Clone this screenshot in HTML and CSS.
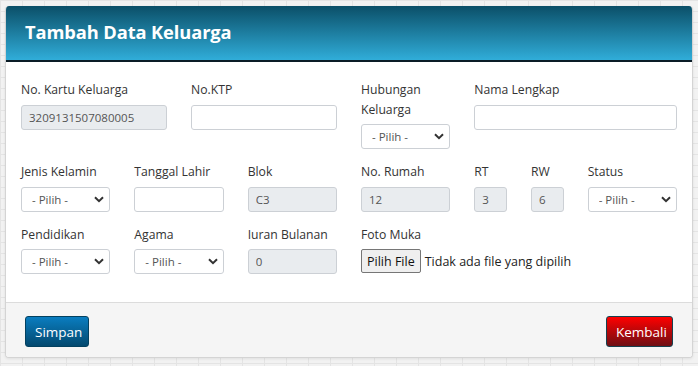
FILE: index.html
```html
<!DOCTYPE html>
<html lang="id">
<head>
<meta charset="utf-8">
<title>Tambah Data Keluarga</title>
<link rel="stylesheet" href="styles.css">
</head>
<body>
<div class="modal">
  <div class="modal-header">
    <h1 class="modal-title">Tambah Data Keluarga</h1>
  </div>
  <div class="modal-body">
    <div class="grid">
      <div class="field span-3">
        <label class="lbl">No. Kartu Keluarga</label>
        <input class="ctl" type="text" value="3209131507080005" readonly>
      </div>
      <div class="field span-3">
        <label class="lbl">No.KTP</label>
        <input class="ctl" type="text">
      </div>
      <div class="field span-2">
        <label class="lbl">Hubungan Keluarga</label>
        <select class="ctl sel"><option>- Pilih -</option></select>
      </div>
      <div class="field span-4">
        <label class="lbl">Nama Lengkap</label>
        <input class="ctl" type="text">
      </div>

      <div class="field span-2">
        <label class="lbl">Jenis Kelamin</label>
        <select class="ctl sel"><option>- Pilih -</option></select>
      </div>
      <div class="field span-2">
        <label class="lbl">Tanggal Lahir</label>
        <input class="ctl" type="text">
      </div>
      <div class="field span-2">
        <label class="lbl">Blok</label>
        <input class="ctl" type="text" value="C3" readonly>
      </div>
      <div class="field span-2">
        <label class="lbl">No. Rumah</label>
        <input class="ctl" type="text" value="12" readonly>
      </div>
      <div class="field span-1">
        <label class="lbl">RT</label>
        <input class="ctl" type="text" value="3" readonly>
      </div>
      <div class="field span-1">
        <label class="lbl">RW</label>
        <input class="ctl" type="text" value="6" readonly>
      </div>
      <div class="field span-2">
        <label class="lbl">Status</label>
        <select class="ctl sel"><option>- Pilih -</option></select>
      </div>

      <div class="field span-2">
        <label class="lbl">Pendidikan</label>
        <select class="ctl sel"><option>- Pilih -</option></select>
      </div>
      <div class="field span-2">
        <label class="lbl">Agama</label>
        <select class="ctl sel"><option>- Pilih -</option></select>
      </div>
      <div class="field span-2">
        <label class="lbl">Iuran Bulanan</label>
        <input class="ctl" type="text" value="0" readonly>
      </div>
      <div class="field span-6">
        <label class="lbl">Foto Muka</label>
        <div class="file">
          <button class="file-btn" type="button">Pilih File</button>
          <span class="file-text">Tidak ada file yang dipilih</span>
        </div>
      </div>
    </div>
  </div>
  <div class="modal-footer">
    <button class="btn btn-primary" type="button">Simpan</button>
    <button class="btn btn-danger" type="button">Kembali</button>
  </div>
</div>
</body>
</html>
```
FILE: styles.css
```css
* { box-sizing: border-box; }

html, body { height: 100%; }

body {
  margin: 0;
  padding: 6px 5px 0 5px;
  font-family: "Open Sans", "Noto Sans", sans-serif;
  color: #333;
  background-color: #f2f2f2;
  background-image:
    linear-gradient(#e4e4e4 1px, transparent 1px),
    linear-gradient(90deg, #e4e4e4 1px, transparent 1px);
  background-size: 22px 11px;
}

.modal {
  width: 688px;
  background: #fff;
  border: 1px solid #d4d4d4;
  border-top: none;
  border-radius: 4px;
  overflow: hidden;
  box-shadow: 0 1px 3px rgba(0,0,0,0.08);
}

.modal-header {
  height: 56px;
  background: linear-gradient(#0b4f68, #30add9);
  border-bottom: 2px solid #0a1c26;
  padding: 0 19px;
  display: flex;
  align-items: center;
}

.modal-title {
  margin: 0;
  color: #fff;
  font-size: 18.3px;
  font-weight: 700;
  letter-spacing: -0.1px;
  padding-bottom: 3px;
}

.modal-body {
  padding: 18px 15px 28px 15px;
}

.grid {
  display: grid;
  grid-template-columns: repeat(12, 1fr);
  column-gap: 24px;
  row-gap: 13px;
}

.span-1 { grid-column: span 1; }
.span-2 { grid-column: span 2; }
.span-3 { grid-column: span 3; }
.span-4 { grid-column: span 4; }
.span-6 { grid-column: span 6; }

.field {
  display: flex;
  flex-direction: column;
  align-items: flex-start;
}

.lbl {
  display: block;
  font-size: 12.2px;
  line-height: 19.5px;
  color: #333;
  margin-bottom: 5px;
}

.ctl {
  width: 100%;
  height: 25px;
  border: 1px solid #ccd0d5;
  border-radius: 3px;
  background: #fff;
  font-family: "Open Sans", "Noto Sans", sans-serif;
  font-size: 11.5px;
  color: #555;
  padding: 0 7px;
  outline: none;
}

input.ctl[readonly] {
  background: #e9ecef;
}

.sel {
  appearance: none;
  -webkit-appearance: none;
  padding: 0 20px 0 10px;
  background-image: url("data:image/svg+xml;utf8,<svg xmlns='http://www.w3.org/2000/svg' width='10' height='7' viewBox='0 0 10 7'><path d='M1 1.2 L5 5.2 L9 1.2' fill='none' stroke='%23333' stroke-width='2'/></svg>");
  background-repeat: no-repeat;
  background-position: right 5px center;
  background-size: 10px 7px;
}

.file {
  display: flex;
  align-items: center;
  gap: 4px;
}

.file-btn {
  height: 24px;
  padding: 0 5px;
  font-family: "Open Sans", "Noto Sans", sans-serif;
  font-size: 12.5px;
  color: #111;
  background: #efefef;
  border: 1px solid #767676;
  border-radius: 2px;
}

.file-text {
  font-size: 12.5px;
  color: #222;
}

.modal-footer {
  background: #f5f5f5;
  border-top: 1px solid #dcdcdc;
  padding: 13px 19px 10px 19px;
  display: flex;
  justify-content: space-between;
  align-items: center;
}

.btn {
  height: 31px;
  border-radius: 3px;
  font-family: "Open Sans", "Noto Sans", sans-serif;
  font-size: 13.5px;
  color: #fff;
  padding: 0 9px;
  cursor: pointer;
}

.btn-primary {
  width: 64px;
  background: linear-gradient(#0a7dc0, #03496f);
  border: 1px solid #034160;
}

.btn-danger {
  width: 67px;
  background: linear-gradient(#ff0000, #6e0f14);
  border: 1px solid #16414f;
}
```
